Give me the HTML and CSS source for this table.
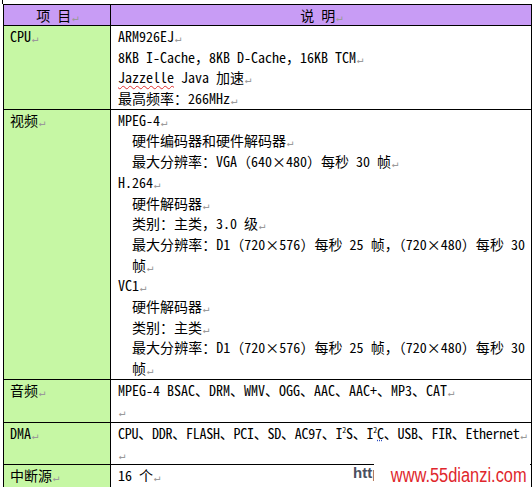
FILE: index.html
```html
<!DOCTYPE html>
<html lang="zh-CN">
<head>
<meta charset="utf-8">
<link rel="stylesheet" href="styles.css">
</head>
<body>
<div class="tick"></div>
<table class="spec">
  <colgroup><col class="c1"><col class="c2"></colgroup>
  <tr class="head">
    <td class="center">项 目<span class="pm">↵</span></td>
    <td class="center">说 明<span class="pm">↵</span></td>
  </tr>
  <tr>
    <td class="key">CPU<span class="pm">↵</span></td>
    <td class="val">
      <p>ARM926EJ<span class="pm">↵</span></p>
      <p>8KB I-Cache，8KB D-Cache，16KB TCM<span class="pm">↵</span></p>
      <p><span class="spell">Jazzelle</span> Java 加速<span class="pm">↵</span></p>
      <p>最高频率：266MHz<span class="pm">↵</span></p>
    </td>
  </tr>
  <tr>
    <td class="key">视频<span class="pm">↵</span></td>
    <td class="val">
      <p>MPEG-4<span class="pm">↵</span></p>
      <p class="ind">硬件编码器和硬件解码器<span class="pm">↵</span></p>
      <p class="ind">最大分辨率：VGA（640×480）每秒 30 帧<span class="pm">↵</span></p>
      <p>H.264<span class="pm">↵</span></p>
      <p class="ind">硬件解码器<span class="pm">↵</span></p>
      <p class="ind">类别：主类，3.0 级<span class="pm">↵</span></p>
      <p class="ind just">最大分辨率：D1（720×576）每秒 25 帧，（720×480）每秒 30 帧<span class="pm">↵</span></p>
      <p>VC1<span class="pm">↵</span></p>
      <p class="ind">硬件解码器<span class="pm">↵</span></p>
      <p class="ind">类别：主类<span class="pm">↵</span></p>
      <p class="ind just">最大分辨率：D1（720×576）每秒 25 帧，（720×480）每秒 30 帧<span class="pm">↵</span></p>
    </td>
  </tr>
  <tr class="two">
    <td class="key">音频<span class="pm">↵</span></td>
    <td class="val">
      <p>MPEG-4 BSAC、DRM、WMV、OGG、AAC、AAC+、MP3、CAT<span class="pm">↵</span></p>
      <p><span class="pm">↵</span></p>
    </td>
  </tr>
  <tr class="two dma">
    <td class="key">DMA<span class="pm">↵</span></td>
    <td class="val">
      <p class="nowrap">CPU、DDR、FLASH、PCI、SD、AC97、I<sup>2</sup>S、I<sup>2</sup><span class="dots">C</span>、USB、FIR、Ethernet<span class="pm">↵</span></p>
      <p><span class="pm">↵</span></p>
    </td>
  </tr>
  <tr class="one">
    <td class="key">中断源<span class="pm">↵</span></td>
    <td class="val"><p>16 个<span class="pm">↵</span></p></td>
  </tr>
</table>
<div class="watermark"><span class="http">http://</span><span class="box"><span class="site">www.55dianzi.com</span></span></div>
</body>
</html>
```
FILE: styles.css
```css
html, body {
  margin: 0;
  padding: 0;
  background: #ffffff;
}
body {
  width: 532px;
  height: 487px;
  overflow: hidden;
  position: relative;
  padding: 4px 0 0 3px;
  box-sizing: border-box;
  font-family: "Noto Sans Mono CJK SC", "Noto Sans CJK SC", "Liberation Mono", monospace;
  font-size: 14px;
  color: #000;
}
.tick {
  position: absolute;
  left: 2px;
  top: 0;
  width: 1px;
  height: 4px;
  background: #000;
}
.spec {
  border-collapse: collapse;
  table-layout: fixed;
  width: 528px;
}
.c1 { width: 107px; }
.c2 { width: 421px; }
.spec td {
  border: 1px solid #000;
  vertical-align: top;
  padding: 0 6px 0 7px;
  line-height: 20.7px;
  overflow: hidden;
}
.spec td.key {
  background: #c6f7a4;
  padding-left: 6px;
}
.head td {
  background: #c89cf5;
  height: 20px;
  line-height: 20px;
}
.spec td.center { text-align: center; }
.val p {
  margin: 0;
  height: 20.7px;
}
.val p.just { height: auto; }
.val p.ind { padding-left: 14px; }
.val p.just { text-align: justify; }
.val p.nowrap {
  white-space: nowrap;
  letter-spacing: -0.25px;
}
.two td { height: 42px; }
.dma td { height: 39px; }
.one td { height: 22px; }
.pm {
  color: #9a9a9a;
  font-size: 11px;
  line-height: 0;
  margin-left: 1px;
  letter-spacing: 0;
}
.spell {
  text-decoration: underline wavy #e03030;
  text-decoration-thickness: 1px;
  text-underline-offset: 2px;
}
.dots {
  text-decoration: underline dotted #3050c0;
}
sup {
  font-size: 8px;
  line-height: 0;
  vertical-align: 6px;
}
.watermark {
  position: absolute;
  left: 352px;
  top: 462px;
  height: 25px;
  width: 180px;
}
.http {
  position: absolute;
  left: 1px;
  top: 2px;
  font-family: "Liberation Sans", Arial, sans-serif;
  font-weight: bold;
  font-size: 15px;
  color: #4a5060;
}
.box {
  position: absolute;
  left: 22px;
  top: 0;
  width: 156px;
  height: 25px;
  background: #ffffff;
}
.site {
  position: absolute;
  right: 3px;
  top: 1px;
  font-family: "Liberation Sans", Arial, sans-serif;
  font-size: 20px;
  line-height: 24px;
  color: #e0262c;
  transform: scaleX(0.82);
  transform-origin: right center;
  white-space: nowrap;
}
```
